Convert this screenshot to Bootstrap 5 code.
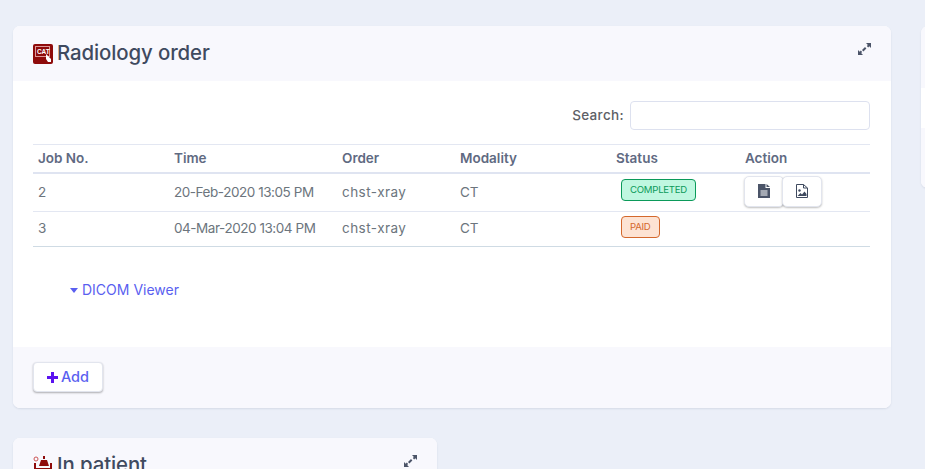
<!DOCTYPE html>
<html lang="en">
<head>
<meta charset="utf-8">
<title>Radiology order</title>
<link href="https://cdn.jsdelivr.net/npm/bootstrap@5.3.0/dist/css/bootstrap.min.css" rel="stylesheet">
<style>
html,body{height:469px;overflow:hidden}
body{background:#ebeff8;font-family:"Inter","Open Sans",sans-serif;color:#6c757d;font-size:13.5px}
.pg{display:grid;grid-template-columns:878px 424px;grid-template-rows:382px auto;column-gap:30px;row-gap:30px;padding:26px 0 0 13px;width:1400px}
.pn{background:#fff;border-radius:7px;box-shadow:0 1px 2px rgba(60,70,110,.12);overflow:hidden}
.pn-wide{height:382px;display:flex;flex-direction:column}
.pn-side{height:162px;align-self:start;display:flex;flex-direction:column}
.pn-low{width:424px;height:120px}
.pn-head{background:#f8f8fd;height:55px;padding:0 20px;display:flex;align-items:center;justify-content:space-between;flex:none}
.pn-side .pn-head{height:62px}
.pn-gap{height:40px;flex:none}
.pn-rest{flex:1;background:#f8f8fd}
.pn-title{font-size:20.4px;font-weight:500;color:#3f4a5f;margin:0;display:flex;align-items:center;gap:4px;letter-spacing:-.1px;line-height:1}
.exp{margin-bottom:9px}
.pn-body{flex:1;padding:20px 21px 0 20px}
.pn-foot{background:#f8f8fd;height:61px;padding:15px 20px;flex:none}
.srch{display:flex;justify-content:flex-end;align-items:center;gap:6px;height:29px;margin-bottom:14px;color:#5d6066;font-weight:500;font-size:13.5px;letter-spacing:.35px}
.srch input{width:240px;height:29px;border:1px solid #dde1ef;border-radius:4px;padding:0 8px;background:#fff}
.tbl{width:837px;table-layout:fixed;margin:0;font-size:13.5px;--bs-table-bg:transparent;--bs-table-color:#6c757d}
.tbl th{font-weight:600;color:#5f6a82;height:28px;padding:0 5px;border-top:1px solid #e3e7f2;border-bottom:2px solid #dfe4f1;vertical-align:middle}
.tbl td{padding:0 5px;vertical-align:middle;height:39px;border-bottom:1px solid #e3e7f2;color:#6c757d}
.tbl tr:last-child td{height:35px;padding-bottom:2px;border-bottom:1px solid #cfdbe4}
.tm{letter-spacing:-.45px}
.ord{letter-spacing:.45px}
.tag{display:inline-block;height:22px;line-height:20px;font-size:9.6px;letter-spacing:-.25px;padding:0 8px;border-radius:4px;border:1px solid;margin-left:5px;transform:translateY(-3px)}
.tag-ok{background:#bff7e0;border-color:#0b9a5a;color:#0b9a5a}
.tag-paid{background:#fde3d3;border-color:#d4682c;color:#d4682c;transform:translateY(-2px)}
.act{display:flex;margin-left:-1px;transform:translateY(-1px)}
.act .btn{width:40px;height:31px;padding:0;background:#fff;border:1px solid #e2e5ee;border-radius:5px;box-shadow:0 1px 2px rgba(0,0,0,.25);display:flex;align-items:center;justify-content:center}
.act .btn+.btn{margin-left:-2px}
.dcm{display:flex;align-items:center;gap:4px;margin:33px 0 0 37px;color:#5a5ff0;text-decoration:none;font-size:14px;line-height:20px}
.add{height:30px;width:70px;padding:0;background:#fff;color:#5a5ff0;border:1px solid #e2e5ee;border-radius:4px;box-shadow:0 1px 2px rgba(0,0,0,.3);font-size:14.5px;font-weight:500;display:flex;align-items:center;justify-content:center;gap:3px}
</style>
</head>
<body>
<div class="pg">
  <section class="pn pn-wide">
    <header class="pn-head">
      <h5 class="pn-title">
        <svg width="20" height="20" viewBox="0 0 20 20"><rect width="20" height="20" rx="2" fill="#8e0b0b"/><rect x="2.5" y="2.5" width="14" height="10" fill="none" stroke="#d99" stroke-width="1"/><text x="4" y="9.5" font-size="6.5" font-weight="700" fill="#fff" font-family="Liberation Sans">CAT</text><path d="M13 10l5 5v3h-3l-2-3z" fill="#fff"/></svg>
        Radiology order
      </h5>
      <svg class="exp" width="13" height="12" viewBox="0 0 13 12" fill="#4b5468"><path d="M8 0h5v5l-1.7-1.7-1.100 1.100-1.400-1.400 1.100-1.100zM5 12H0V7l1.700 1.700 1.100-1.100 1.400 1.400-1.100 1.100zM4 7l3-3 1.400 1.400-3 3z"/></svg>
    </header>
    <div class="pn-body">
      <div class="srch"><label for="q">Search:</label><input id="q" type="search"></div>
      <table class="table tbl">
        <colgroup><col style="width:136px"><col style="width:168px"><col style="width:118px"><col style="width:156px"><col style="width:129px"><col style="width:130px"></colgroup>
        <thead><tr><th>Job No.</th><th>Time</th><th>Order</th><th>Modality</th><th>Status</th><th>Action</th></tr></thead>
        <tbody>
          <tr><td>2</td><td class="tm">20-Feb-2020 13:05 PM</td><td class="ord">chst-xray</td><td>CT</td><td><span class="tag tag-ok">COMPLETED</span></td>
            <td><div class="act">
              <button class="btn" type="button" aria-label="Report"><svg width="12" height="14" viewBox="0 0 12 14"><path d="M0 0h7.5v4H12v10H0z" fill="#4b5468"/><path d="M8.5 0L12 3H8.5z" fill="#4b5468"/><path d="M2.500 7h7M2.500 9h7M2.500 11h7" stroke="#fff" stroke-width="1"/></svg></button>
              <button class="btn" type="button" aria-label="Image"><svg width="12" height="14" viewBox="0 0 12 14"><path d="M.5.5h7l4 3.500v9.500h-11z" fill="#fff" stroke="#3f4a5f"/><path d="M7.5.5v3.500h4" fill="none" stroke="#3f4a5f"/><circle cx="3.5" cy="6.5" r="1.2" fill="#3f4a5f"/><path d="M1.500 12l3-3 1.500 1.500 2.500-3 2 2.500V12z" fill="#3f4a5f"/></svg></button>
            </div></td></tr>
          <tr><td>3</td><td class="tm">04-Mar-2020 13:04 PM</td><td class="ord">chst-xray</td><td>CT</td><td><span class="tag tag-paid">PAID</span></td><td></td></tr>
        </tbody>
      </table>
      <a class="dcm" href="#"><svg width="8" height="5" viewBox="0 0 8 5"><path d="M0 0h8L4 5z" fill="#5a5ff0"/></svg>DICOM Viewer</a>
    </div>
    <footer class="pn-foot">
      <button class="btn add" type="button"><svg width="11" height="11" viewBox="0 0 11 11"><path d="M4 0h3v4h4v3H7v4H4V7H0V4h4z" fill="#5b12f0"/></svg>Add</button>
    </footer>
  </section>
  <section class="pn pn-side"><header class="pn-head"></header><div class="pn-gap"></div><div class="pn-rest"></div></section>
  <section class="pn pn-low">
    <header class="pn-head">
      <h5 class="pn-title">
        <svg width="20" height="20" viewBox="0 0 20 20" fill="#8e0b0b"><circle cx="3" cy="3" r="2" fill="none" stroke="#c55" stroke-width="1"/><path d="M10 0h2v3h-2zM8 4h6l2 6H6zM1 7h2v5h14V7h2v13H1z"/></svg>
        In patient
      </h5>
      <svg class="exp" width="13" height="12" viewBox="0 0 13 12" fill="#4b5468"><path d="M8 0h5v5l-1.700-1.700-1.100 1.100-1.400-1.400 1.100-1.100zM5 12H0V7l1.700 1.700 1.100-1.100 1.400 1.400-1.100 1.100zM4 7l3-3 1.400 1.400-3 3z"/></svg>
    </header>
  </section>
</div>
<script src="https://cdn.jsdelivr.net/npm/bootstrap@5.3.0/dist/js/bootstrap.bundle.min.js"></script>
</body>
</html>
